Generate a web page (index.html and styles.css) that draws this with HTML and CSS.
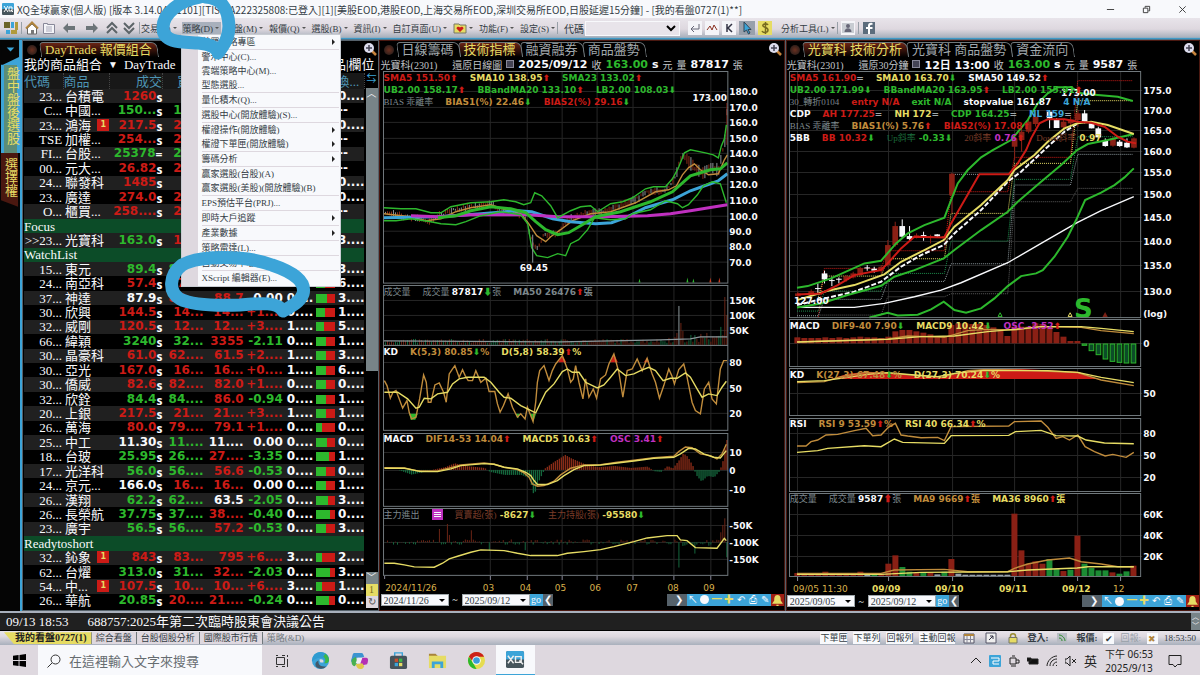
FILE: index.html
```html
<!DOCTYPE html>
<html lang="zh-Hant">
<head>
<meta charset="utf-8">
<title>XQ全球贏家(個人版)</title>
<link rel="stylesheet" href="styles.css">
</head>
<body>
<header class="titlebar">
  <svg class="app-logo" viewBox="0 0 12 12"><rect width="12" height="7" rx="1" fill="#3ca4d8"/><rect y="6" width="12" height="6" rx="1" fill="#46555c"/><path d="M2 3l4 6M6 3L2 9M7 4h3v4H7zM9 7l2 2" stroke="#fff" fill="none"/></svg>
  <h1>XQ全球贏家(個人版) [版本 3.14.04.21101][TISC:A222325808:已登入][1][美股EOD,港股EOD,上海交易所EOD,深圳交易所EOD,日股延遲15分鐘] - [我的看盤0727(1)**]</h1>
  <div class="win-buttons">
    <button aria-label="最小化"><svg viewBox="0 0 10 10"><path d="M1 5h8"/></svg></button>
    <button aria-label="還原"><svg viewBox="0 0 10 10"><path d="M1.500 3.500h5v5h-5zM3.500 3V1.500h5v5H7"/></svg></button>
    <button aria-label="關閉"><svg viewBox="0 0 10 10"><path d="M1.500 1.500l7 7M8.500 1.500l-7 7"/></svg></button>
  </div>
</header>

<nav class="toolbar">
  <div class="tools">
    <button aria-label="版面"><svg viewBox="0 0 14 14"><path fill="#6a6428" d="M0 1h6v6H0z"/><path fill="#3ca4d8" d="M7 1h3v6H7zM2 9h4v4H2z"/><path fill="#b09a3c" d="M11 1h3v8h-3zM7 9h6v4H7z"/></svg></button>
    <i class="sep"></i>
    <button aria-label="首頁"><svg viewBox="0 0 14 14"><path d="M2.500 7v6h9V7L7 3z" fill="#fff" stroke="#666"/><path d="M1 7.500L7 1.500l6 6" fill="none" stroke="#b0843c" stroke-width="2"/><path d="M6 9h3v4H6z" fill="#777"/></svg></button>
    <button aria-label="頁面"><svg viewBox="0 0 14 14"><path d="M1.500 2.500h4v1h7v9h-11z" fill="#f4f4f8" stroke="#889"/><path d="M4 6h6M4 8h6M4 10h6" stroke="#aab"/></svg></button>
    <button class="wide" aria-label="上一頁"><svg viewBox="0 0 14 14"><path d="M1 7l5-5v3h7v4H6v3z" fill="#6c7478"/></svg></button>
    <button class="wide" aria-label="下一頁"><svg viewBox="0 0 14 14"><path d="M13 7L8 2v3H1v4h7v3z" fill="#6c7478"/></svg></button>
    <button aria-label="向上"><svg viewBox="0 0 14 14"><path d="M2 7l5-5 5 5M2 12l5-5 5 5" fill="none" stroke="#5c6468" stroke-width="2"/></svg></button>
    <button aria-label="向下"><svg viewBox="0 0 14 14"><path d="M2 2l5 5 5-5M2 7l5 5 5-5" fill="none" stroke="#5c6468" stroke-width="2"/></svg></button>
    <i class="sep"></i>
  </div>
  <div class="menus">
    <button>交易(T)</button>
    <div class="menu-open">
      <button class="on">策略(D)</button>
      <ul class="dropdown">
        <li class="more">普羅策略專區</li>
        <li class="line">警示中心(C)...</li>
        <li>雲端策略中心(M)...</li>
        <li>型態選股...</li>
        <li class="line">量化積木(Q)...</li>
        <li class="line">選股中心(開放體驗)(S)...</li>
        <li class="line more">權證操作(開放體驗)</li>
        <li class="more">權證下單匣(開放體驗)</li>
        <li class="line more">籌碼分析</li>
        <li class="line">贏家選股(台股)(A)</li>
        <li>贏家選股(美股)(開放體驗)(B)</li>
        <li class="line">EPS預估平台(PRJ)...</li>
        <li class="line more">即時大戶追蹤</li>
        <li class="line more">產業數據</li>
        <li class="line">策略雷達(L)...</li>
        <li class="line">自動交易中心(R)...</li>
        <li class="line">XScript 編輯器(E)...</li>
      </ul>
    </div>
    <button>大盤(M)</button>
    <button>報價(Q)</button>
    <button>選股(B)</button>
    <button>資訊(I)</button>
    <button>自訂頁面(U)</button>
    <button aria-label="我的最愛"><svg viewBox="0 0 14 14"><path d="M1 3h5l1 1h6v8H1z" fill="#e6dc64" stroke="#776"/><path d="M7 11L3.500 7.500c0-2 2.500-2.500 3.500-1 1-1.500 3.500-1 3.500 1z" fill="#cc1b16"/></svg></button>
    <button>功能(F)</button>
    <button>設定(S)</button>
  </div>
  <i class="sep"></i>
  <label class="code-label" for="code">代碼</label>
  <select id="code" class="code"><option></option></select>
  <div class="tools right-tools">
    <button class="boxed" aria-label="輸入"><svg viewBox="0 0 14 14"><path d="M11 3v5H4M6 5L3 8l3 3" fill="none" stroke="#667"/></svg></button>
    <button class="boxed" aria-label="走勢"><svg viewBox="0 0 14 14"><path d="M2 9l3-4 2 4 2-5 3 5" fill="none" stroke="#8a3020"/></svg></button>
    <button class="boxed" aria-label="K線"><svg viewBox="0 0 14 14"><path d="M5 3v8M10 3L6 7l4 4" fill="none" stroke="#334" stroke-width="1.500"/></svg></button>
    <button class="picked" aria-label="選取"><svg viewBox="0 0 14 14"><path d="M4 1v10l2.500-2 2 4 1.500-1-2-3.500h3z" fill="#3ca4d8" stroke="#345"/></svg></button>
    <button class="gold" aria-label="金額"><svg viewBox="0 0 14 14"><path d="M10 4c-1-2-6-1-5 1s5 1 5 4-5 3-6 1M7.500 1v12" fill="none" stroke="#776a20" stroke-width="1.500"/></svg></button>
  </div>
  <div class="menus"><button>分析工具(L)</button></div>
  <div class="tools">
    <i class="sep"></i>
    <button class="boxed" aria-label="客服"><svg viewBox="0 0 14 14"><path d="M1 2h12v10H1z" fill="#c8ccd2"/><circle cx="7" cy="5" r="2" fill="#667"/><path d="M3.500 11c0-5 7-5 7 0z" fill="#667"/></svg></button>
    <i class="sep"></i>
    <button aria-label="Facebook"><svg viewBox="0 0 14 14"><path d="M1 1h12v12H1z" fill="#5c6c7c"/><path d="M8 13V8h2.500V6H8V5q0-1.500 2.500-1.200V2Q6 1.200 6 5v1H4v2h2v5z" fill="#fff"/></svg></button>
  </div>
</nav>

<main class="workspace">
  <aside class="side">
    <svg class="side-top" viewBox="0 0 20 26"><path d="M0 0h19v18L2 26H0z" fill="#050505"/><path d="M6 8h8l-4 4z" fill="#3ca4d8"/></svg>
    <a class="side-tab active" href="#a">盤中盤後選股</a>
    <a class="side-tab" href="#b">選擇權</a>
  </aside>

  <section class="panel quotes-panel">
    <div class="tabs">
      <i class="knob"></i>
      <a class="tab on" href="#q">DayTrade 報價組合</a>
      <svg class="lens" viewBox="0 0 14 14"><path d="M9 9l4 4" stroke="#c8843c" stroke-width="2.500"/><circle cx="6" cy="6" r="5" fill="#dde"/><path d="M3 6h6M6 3v6" stroke="#445" stroke-width="1.500"/></svg>
    </div>
    <div class="combo"><span>我的商品組合</span><span>▼</span><span>DayTrade</span><span class="combo-end">商品|欄位</span></div>
    <div class="quotes-wrap">
      <table class="quotes">
        <colgroup><col class="w-code"><col class="w-name"><col class="w-price"><col class="w-c5"><col class="w-c6"><col class="w-c7"><col class="w-c8"><col class="w-bar"><col class="w-c9"></colgroup>
        <thead><tr><th>代碼</th><th>商品</th><th class="r">成交</th><th class="r">買進</th><th class="r">賣出</th><th class="r">漲幅</th><th>單量</th><th></th><th>換...</th></tr></thead>
        <tbody id="quotes"></tbody>
      </table>
      <div class="vscroll">
        <span class="vs-top">⇆</span><span class="vs-thumb">︿</span><span class="vs-track"></span><span class="vs-btn">﹀</span><span class="vs-one">1</span><span class="vs-btn light">↻</span>
      </div>
    </div>
  </section>

  <section class="panel chart-panel day">
    <div class="tabs">
      <i class="knob"></i>
      <a class="tab" href="#1">日線籌碼</a><a class="tab on" href="#2">技術指標</a><a class="tab" href="#3">融資融券</a><a class="tab" href="#4">商品盤勢</a>
      <svg class="lens" viewBox="0 0 14 14"><path d="M9 9l4 4" stroke="#c8843c" stroke-width="2.500"/><circle cx="6" cy="6" r="5" fill="#dde"/><path d="M3 6h6M6 3v6" stroke="#445" stroke-width="1.500"/></svg>
    </div>
    <div class="info"><span class="sym">光寶科(2301)</span><span>還原日線圖</span><i class="mark"></i><b>2025/09/12</b><span>收</span><b class="green">163.00</b><b>s</b><span>元</span><span>量</span><b>87817</b><span>張</span></div>

    <div class="pane">
      <div class="legend">
        <p><span class="red">SMA5 151.50<i class="up">⬆</i></span><span class="yellow">SMA10 138.95<i class="up">⬆</i></span><span class="green">SMA23 133.02<i class="up">⬆</i></span></p>
        <p><span class="green">UB2.00 158.17<i class="up">⬆</i></span><span class="green">BBandMA20 133.10<i class="up">⬆</i></span><span class="green">LB2.00 108.03<i class="dn">⬇</i></span></p>
        <p><span class="dim">BIAS 乖離率</span><span class="orange">BIAS1(%) 22.46<i class="dn">⬇</i></span><span class="red">BIAS2(%) 29.16<i class="dn">⬇</i></span></p>
      </div>
      <svg viewBox="380 71 404 214">
        <g class="grid" id="day-grid1"></g>
        <g id="day-candles"></g>
        <polyline class="l-orange" points="383,214 410,217 425,221 440,219 455,212 470,208 490,205 505,210 520,214 528,224 536,236 545,242 550,237 560,230 572,221 590,214 610,212 635,203 655,192 668,190 676,186 682,175 688,168 694,164 700,170 708,175 718,174 724,160 727,155"/>
        <polyline class="l-blue fat" points="383,218 437,217 480,214 505,212 517,211 531,212 552,219 570,222 595,224 611,223 625,218 645,208 672,200 690,191 710,184 718,181 727,174"/>
        <polyline class="l-magenta fat" points="410,216 437,217 470,215 527,215 557,217 603,217 647,216 670,214 690,211 727,205"/>
        <polyline class="l-green fat" points="437,218 455,216 470,211 490,207 510,209 525,213 535,222 545,230 557,235 568,233 580,226 595,217 620,212 650,202 672,192 690,176 710,170 720,169 727,163"/>
        <polyline class="l-green" points="383,208 400,209 415,209 430,213 440,213 450,207 470,203 490,202 503,200 515,202 523,205 530,203 534,193 541,196 550,206 557,218 570,211 580,207 590,206 597,212 610,204 622,202 632,198 645,189 653,187 665,187 672,179 678,168 684,153 690,150 705,153 713,155 718,158 721,146 724,139 726,125"/>
        <polyline class="l-green" points="383,221 395,221 410,219 430,222 440,224 455,225 465,222 480,216 500,212 520,215 527,224 531,248 536,256 547,258 557,254 565,256 570,244 578,240 587,230 594,218 610,220 625,219 632,214 650,210 665,201 677,204 682,208 688,205 697,195 703,186 712,182 720,184 726,203"/>
        <path class="l-gray" d="M532 235v28"/>
        <path d="M638 283l1-4 1 4zM686 283l1-5 1 5zM692 283l1-4 1 4z" fill="#2db82d"/><path d="M709 283l1-5 1 5zM718 283l1-5 1 5z" fill="#c83c20"/>
        <text x="519" y="271">69.45</text><text x="692" y="101">173.00</text>
        <rect class="frame" x="382.500" y="71.500" width="345" height="212"/>
      </svg>
    </div>
    <div class="pane">
      <div class="legend"><p class="dim"><span>成交量</span><span>成交量 <b class="white">87817</b><i class="dn">⬇</i>張</span><span>MA50 26476<i class="up">⬆</i>張</span></p></div>
      <svg viewBox="380 285 404 61">
        <g class="grid" id="day-grid2"></g>
        <g id="day-vol"></g>
        <polyline class="l-gray" points="383,341 560,342 660,340 690,339 700,337 727,337"/>
        <rect class="frame" x="382.500" y="285.500" width="345" height="60"/>
      </svg>
    </div>
    <div class="pane">
      <div class="legend"><p><span class="white">KD</span><span class="orange">K(5,3) 80.85<i class="dn">⬇</i>%</span><span class="yellow">D(5,8) 58.39<i class="up">⬆</i>%</span></p></div>
      <svg viewBox="380 346 404 87">
        <g class="grid" id="day-grid3"></g>
        <g transform="translate(370 340) scale(.33333)">
          <path fill="#2db82d" d="M115 225h26l-8 18h-14zM434 225h14l-6 14zM478 225h18l-8 24z"/>
          <path fill="#cc1b16" d="M563 70l12-22 12 22zM720 70l10-26 12 26zM820 70l9-14 7 14z"/>
          <polyline class="l-orange" points="40,125 48,140 58,178 66,160 75,155 84,178 95,208 108,185 115,222 122,240 135,235 146,180 158,108 166,130 172,190 180,190 192,138 205,132 218,160 226,190 235,105 245,90 252,80 265,115 275,92 283,110 292,125 305,125 315,95 330,130 345,118 355,158 372,158 380,195 388,220 398,200 412,165 425,205 440,235 450,225 463,240 470,205 487,248 495,190 500,130 507,95 520,80 535,125 545,95 555,75 575,50 590,90 600,130 608,120 615,80 625,130 637,180 645,120 655,175 668,150 678,178 690,120 705,108 715,75 730,45 745,100 757,175 770,95 785,90 800,60 815,95 830,58 845,105 855,130 867,178 880,140 895,90 904,110 912,135 925,92 940,75 949,110 957,150 965,190 975,215 990,225 1002,150 1015,130 1025,180 1038,195 1050,90 1060,65 1070,65"/>
          <polyline class="l-yellow" points="40,160 80,160 110,180 135,208 145,205 160,178 180,180 200,165 230,160 245,135 265,120 290,115 340,115 360,130 385,160 400,175 420,178 450,200 475,212 495,222 510,190 525,160 550,135 575,98 590,90 605,100 625,100 645,130 680,147 700,138 720,115 740,90 765,110 790,105 810,95 835,85 855,95 878,125 900,118 920,118 945,102 960,115 980,150 995,175 1015,165 1040,170 1055,145 1068,127"/>
        </g>
        <rect class="frame" x="382.500" y="346.500" width="345" height="85"/>
      </svg>
    </div>
    <div class="pane">
      <div class="legend"><p><span class="white">MACD</span><span class="orange">DIF14-53 14.04<i class="up">⬆</i></span><span class="yellow">MACD5 10.63<i class="up">⬆</i></span><span class="magenta">OSC 3.41<i class="up">⬆</i></span></p></div>
      <svg viewBox="380 433 404 76">
        <g class="grid" id="day-grid4"></g>
        <g transform="translate(370 340) scale(.33333)">
          <g id="day-osc"></g>
          <polyline class="l-orange" points="40,386 100,387 140,396 200,396 240,386 270,378 340,372 370,376 400,385 440,392 460,402 475,415 485,435 500,442 520,440 550,427 570,408 600,388 640,378 690,377 740,370 790,364 850,356 910,352 925,338 945,324 965,326 990,345 1020,350 1040,360 1055,345 1068,316"/>
          <polyline class="l-yellow" points="40,388 100,388 150,398 200,398 240,390 270,380 340,374 370,376 400,385 440,390 465,400 480,410 490,425 500,437 530,437 560,425 580,410 610,392 640,380 690,378 740,372 790,366 850,358 910,355 930,345 955,328 975,330 1000,345 1030,355 1050,357 1068,335"/>
        </g>
        <rect class="frame" x="382.500" y="434.500" width="345" height="73"/>
      </svg>
    </div>
    <div class="pane">
      <div class="legend"><p><span class="dim">主力進出</span><i class="note"></i><span class="yellow"><em>買賣超(張)</em> -8627<i class="dn">⬇</i></span><span class="yellow"><em>主力持股(張)</em> -95580<i class="dn">⬇</i></span></p></div>
      <svg viewBox="380 509 404 68">
        <g class="grid" id="day-grid5"></g>
        <g transform="translate(370 340) scale(.33333)">
          <g id="day-net"></g>
          <polyline class="l-yellow" points="40,673 70,673 100,678 130,684 190,685 215,673 235,660 260,652 300,640 330,633 400,635 440,643 480,650 560,650 590,643 640,638 690,632 730,623 790,608 830,597 890,590 920,590 930,603 950,605 975,626 1040,628 1062,598 1068,605"/>
        </g>
        <rect class="frame" x="382.500" y="509.500" width="345" height="67"/>
      </svg>
    </div>
    <svg viewBox="380 577 404 18">
      <path stroke="#889" d="M383.500 577v3M489.500 577v4M526.500 577v4M561.500 577v4M596.500 577v4M632.500 577v4M673.500 577v4M710.500 577v4"/>
      <g class="dates"><text x="384" y="592">2024/11/26</text><text x="482" y="592">03</text><text x="519" y="592">04</text><text x="554" y="592">05</text><text x="589" y="592">06</text><text x="626" y="592">07</text><text x="667" y="592">08</text><text x="703" y="592">09</text></g>
    </svg>
    <div class="range">
      <span class="pick"><select aria-label="起始日"><option>2024/11/26</option></select></span><span>~</span>
      <span class="pick"><select aria-label="結束日"><option>2025/09/12</option></select></span>
      <button class="go">go</button><button class="nudge">❮</button><i class="track"></i><button class="nudge end">❯</button>
      <span class="strip"><button aria-label="游標">↖</button><button aria-label="時間"><i class="clock"></i></button><button class="gold-t" aria-label="縮小">━</button><button class="gold-t" aria-label="放大">✚</button><button aria-label="還原">↶</button><button aria-label="列印">⎙</button><button aria-label="畫線">✎</button></span>
      <button class="bell" aria-label="警示"><svg viewBox="0 0 12 12"><path d="M6 1c3 0 3 3 3 5l2 3H1l2-3c0-2 0-5 3-5zM5 10h2v1H5z" fill="#e6dc64"/></svg></button>
    </div>
  </section>

  <section class="panel chart-panel min30">
    <div class="tabs">
      <i class="knob"></i>
      <a class="tab on" href="#5">光寶科 技術分析</a><a class="tab" href="#6">光寶科 商品盤勢</a><a class="tab" href="#7">資金流向</a>
      <svg class="lens" viewBox="0 0 14 14"><path d="M9 9l4 4" stroke="#c8843c" stroke-width="2.500"/><circle cx="6" cy="6" r="5" fill="#dde"/><path d="M3 6h6M6 3v6" stroke="#445" stroke-width="1.500"/></svg>
    </div>
    <div class="info"><span class="sym">光寶科(2301)</span><span>還原30分鐘</span><i class="mark"></i><b>12日 13:00</b><span>收</span><b class="green">163.00</b><b>s</b><span>元</span><span>量</span><b>9587</b><span>張</span></div>

    <div class="pane">
      <div class="legend">
        <p><span class="red">SMA5 161.90<i class="eq">=</i></span><span class="yellow">SMA10 163.70<i class="dn">⬇</i></span><span class="white">SMA50 149.52<i class="up">⬆</i></span></p>
        <p><span class="green">UB2.00 171.99<i class="dn">⬇</i></span><span class="green">BBandMA20 163.95<i class="up">⬆</i></span><span class="green">LB2.00 155.91<i class="up">⬆</i></span></p>
        <p><span class="dim">30_轉折0104</span><span class="red">entry N/A</span><span class="green">exit N/A</span><span class="white">stopvalue 161.87</span><span class="blue">4 N/A</span></p>
        <p><span class="white">CDP</span><span class="red">AH 177.25<i class="eq">=</i></span><span class="yellow">NH 172<i class="eq">=</i></span><span class="green">CDP 164.25<i class="eq">=</i></span><span class="blue">NL 159<i class="eq">=</i></span></p>
        <p><span class="dim">BIAS 乖離率</span><span class="orange">BIAS1(%) 5.76<i class="up">⬆</i></span><span class="red">BIAS2(%) 17.08<i class="up">⬆</i></span></p>
        <p><span class="white">5BB</span><span class="red">BB 10.32<i class="dn">⬇</i></span><span class="green"><em class="teal">Up斜率</em> -0.33<i class="dn">⬇</i></span><span class="magenta"><em>20斜率</em> 0.76<i class="up">⬆</i></span><span class="yellow"><em>Down斜率</em> 0.97</span></p>
      </div>
      <svg viewBox="786 71 412 248">
        <g class="grid" id="min-grid1"></g>
        <g transform="translate(780 140) scale(.33333)">
          <g class="dots">
            <polyline class="l-red" points="112,530 130,385 300,385 320,332 490,332 510,155 680,155 700,52 868,52 890,-178 1055,-178"/>
            <polyline class="l-yellow" points="112,470 130,408 300,408 320,356 490,356 510,220 680,220 700,70 868,70 890,-118 1055,-118"/>
            <polyline class="l-teal" points="48,513 112,513 130,453 300,453 320,400 490,400 510,303 680,303 700,118 868,118 890,-10 1055,-10"/>
            <polyline class="l-gray" points="48,527 112,527 130,478 300,478 320,424 490,424 510,371 680,371 700,135 868,135 890,43 1055,43"/>
            <polyline class="l-dim" points="112,525 300,525 320,470 490,470 510,461 680,461 700,185 868,185 890,145 1055,145"/>
            <polyline class="l-gray" points="510,103 595,103"/>
          </g>
          <g id="min-candles"></g>
          <polyline class="l-white" points="48,502 220,502 310,490 400,470 480,450 540,428 680,368 780,310 888,248 960,212 1058,170"/>
          <polyline class="l-white mid dash" points="48,495 130,475 220,455 300,425 360,380 420,345 488,315 520,280 600,210 680,125 720,95 800,20 850,-25 890,-50"/>
          <polyline class="l-green mid" points="265,532 320,518 350,526 410,524 450,508 488,485 520,510 555,518 600,505 640,475 680,438 720,408 765,400 785,390 820,350 860,290 885,240 912,180 960,158 1000,135 1030,112 1058,85"/>
          <polyline class="l-green mid" points="48,502 120,490 200,465 300,437 340,410 400,390 488,355 520,330 600,270 680,215 710,185 780,125 840,75 888,30 920,12 980,0 1058,-18"/>
          <polyline class="l-green mid" points="48,443 80,438 150,415 250,370 300,362 345,310 380,280 430,255 490,233 510,180 530,130 560,90 600,52 635,30 690,0 740,-60 770,-110 800,-140 830,-158 870,-158 900,-140 950,-135 1010,-130 1055,-117"/>
          <polyline class="l-yellow mid" points="48,480 140,452 220,435 310,403 360,365 430,330 488,300 520,260 600,195 680,120 700,90 760,45 800,5 850,-35 888,-50 930,-55 980,-45 1058,-18"/>
          <polyline class="l-red mid" points="48,463 120,460 170,435 220,405 300,390 320,370 360,325 400,290 490,292 510,250 595,103 683,103 710,70 735,30 750,-5 775,-50 800,-62 850,-62 890,-55 930,-52 970,-40 1010,-10 1040,5 1065,10"/>
          <path class="l-green" d="M651 529l6-11 6 11z"/><path class="l-yellow" d="M861 529l6-11 6 11z"/><path fill="#7a2015" d="M964 531l8-15 8 15z"/>
        </g>
        <text x="1060" y="96">173.00</text>
        <text x="793" y="304">127.00</text>
        <text class="big-s" x="1073" y="318">S</text>
        <rect class="frame" x="788.500" y="71.500" width="351" height="246"/>
      </svg>
    </div>
    <div class="pane">
      <div class="legend"><p><span class="white">MACD</span><span class="orange">DIF9-40 7.90<i class="dn">⬇</i></span><span class="yellow">MACD9 10.42<i class="dn">⬇</i></span><span class="magenta">OSC -2.52<i class="up">⬆</i></span></p></div>
      <svg viewBox="786 319 412 49">
        <g class="grid" id="min-grid2"></g>
        <g transform="translate(780 140) scale(.33333)">
          <g id="min-osc"></g>
          <polyline class="l-orange" points="48,606 320,597 380,588 490,592 560,572 620,568 700,570 780,560 900,562 960,572 1058,581"/>
          <polyline class="l-yellow" points="48,606 320,598 420,590 520,588 620,575 700,568 780,560 900,560 960,565 1058,575"/>
        </g>
        <rect class="frame" x="788.500" y="319.500" width="351" height="47"/>
      </svg>
    </div>
    <div class="pane">
      <div class="legend"><p><span class="white">KD</span><span class="orange">K(27,3) 67.48<i class="dn">⬇</i>%</span><span class="yellow">D(27,3) 70.24<i class="dn">⬇</i>%</span></p></div>
      <svg viewBox="786 368 412 49">
        <g class="grid" id="min-grid3"></g>
        <g transform="translate(780 340) scale(.33333)">
          <path fill="#cc1b16" d="M150 117l50-16 60-6 80 4 60 10 80 4 80-20 60-6h100l170 8 60 22z"/>
          <polyline class="l-orange" points="48,128 130,125 180,110 250,98 330,100 480,112 560,92 620,88 750,92 890,98 960,120 1058,137"/>
          <polyline class="l-yellow" points="48,125 130,122 200,112 260,103 320,98 400,105 470,110 520,100 600,92 700,92 800,92 890,97 960,112 1058,128"/>
        </g>
        <rect class="frame" x="788.500" y="368.500" width="351" height="47"/>
      </svg>
    </div>
    <div class="pane">
      <div class="legend"><p><span class="white">RSI</span><span class="orange">RSI 9 53.59<i class="up">⬆</i>%</span><span class="yellow">RSI 40 66.34<i class="up">⬆</i>%</span></p></div>
      <svg viewBox="786 417 412 75">
        <g class="grid" id="min-grid4"></g>
        <g transform="translate(780 340) scale(.33333)">
          <polyline class="l-orange" points="48,318 75,318 90,305 110,300 135,285 170,283 220,272 255,265 275,287 300,285 322,262 343,250 360,285 380,288 420,293 470,292 490,302 510,260 683,258 700,245 780,243 800,262 825,295 845,290 865,300 890,285 912,320 940,335 972,348 995,343 1035,352 1058,337"/>
          <polyline class="l-yellow" points="48,337 110,332 140,325 250,317 300,320 340,297 365,307 490,310 510,287 683,286 703,275 780,271 825,287 890,288 915,300 970,309 1058,311"/>
        </g>
        <rect class="frame" x="788.500" y="418.500" width="351" height="73"/>
      </svg>
    </div>
    <div class="pane">
      <div class="legend"><p class="dim"><span>成交量</span><span>成交量 <b class="white">9587</b><i class="up">⬆</i>張</span><span class="orange">MA9 9669<i class="up">⬆</i>張</span><span class="yellow">MA36 8960<i class="up">⬆</i>張</span></p></div>
      <svg viewBox="786 492 412 85">
        <g class="grid" id="min-grid5"></g>
        <g transform="translate(780 340) scale(.33333)">
          <g id="min-vol"></g>
          <polyline class="l-orange" points="48,700 300,700 340,690 490,688 560,695 680,695 700,685 740,672 800,660 865,654 900,665 960,672 1010,680 1058,680"/>
          <polyline class="l-yellow" points="48,703 300,703 420,697 680,695 740,690 888,684 920,680 1058,680"/>
        </g>
        <rect class="frame" x="788.500" y="493.500" width="351" height="83"/>
      </svg>
    </div>
    <svg viewBox="786 577 412 18">
      <path stroke="#889" d="M796.500 577v4M887.500 577v4M951.500 577v4M1013.500 577v4M1076.500 577v4M1119.500 577v4"/>
      <g class="dates"><text x="792" y="592">09/05 11:30</text><text class="bold" x="871" y="592">09/09</text><text class="bold" x="934" y="592">09/10</text><text class="bold" x="998" y="592">09/11</text><text class="bold" x="1061" y="592">09/12</text><text x="1112" y="592">12</text></g>
    </svg>
    <div class="range">
      <span class="pick"><select aria-label="起始日"><option>2025/09/05</option></select></span><span>~</span>
      <span class="pick"><select aria-label="結束日"><option>2025/09/12</option></select></span>
      <button class="go">go</button><button class="nudge">❮</button><i class="track"></i><button class="nudge end">❯</button>
      <span class="strip"><button aria-label="游標">↖</button><button aria-label="時間"><i class="clock"></i></button><button class="gold-t" aria-label="縮小">━</button><button class="gold-t" aria-label="放大">✚</button><button aria-label="還原">↶</button><button aria-label="列印">⎙</button><button aria-label="畫線">✎</button></span>
      <button class="bell" aria-label="警示"><svg viewBox="0 0 12 12"><path d="M6 1c3 0 3 3 3 5l2 3H1l2-3c0-2 0-5 3-5zM5 10h2v1H5z" fill="#e6dc64"/></svg></button>
    </div>
  </section>
</main>

<div class="ticker"><span>09/13 18:53</span><span>688757:2025年第二次臨時股東會決議公告</span><span class="spin"><button>︿</button><button>﹀</button></span></div>

<div class="status">
  <a class="page on" href="#p1">我的看盤0727(1)</a><a class="page" href="#p2">綜合看盤</a><a class="page" href="#p3">台股個股分析</a><a class="page" href="#p4">國際股市行情</a><a class="page plain" href="#p5">策略(&amp;D)</a>
  <div class="status-right">
    <button>下單匣</button><button>下單列</button><button>回報列</button><button>主動回報</button>
    <svg viewBox="0 0 12 12"><path d="M1 2h10v9H1z" fill="#eee" stroke="#556"/><path d="M1 2h10v2H1z" fill="#b0843c"/><path d="M4 4v7M7.500 4v7M1 7.500h10" stroke="#889"/></svg>
    <svg viewBox="0 0 12 12"><path d="M1 1h10v10H1z" fill="#eee" stroke="#556"/><path d="M4 8l4-4M5 4h3v3" fill="none" stroke="#334"/></svg>
    <svg viewBox="0 0 12 12"><path d="M3.500 6V4c0-3 5-3 5 0v2" fill="none" stroke="#998c30" stroke-width="1.500"/><path d="M2 5.500h8V11H2z" fill="#e6dc64" stroke="#776"/></svg>
    <b>登入:</b>
    <svg viewBox="0 0 12 12"><path d="M1 1h10v10H1z" fill="#b8bcc4"/><path d="M3 3c3 0 6 3 6 6M3 6c2 0 3 1 3 3" fill="none" stroke="#2a8a2a"/></svg>
    <b>報價:</b><span class="box">✔</span><span class="off">回報:</span><span class="box x">✖</span><time>18:53:50</time>
  </div>
</div>

<footer class="taskbar">
  <button class="start" aria-label="開始"><svg viewBox="0 0 14 14"><path d="M0 2l6-1v5.500H0zM7 1l7-1v6.500H7zM0 7.500h6V13l-6-1zM7 7.500h7V14l-7-1z"/></svg></button>
  <label class="search"><svg viewBox="0 0 14 14"><circle cx="8.500" cy="5.500" r="4.500" fill="none" stroke="#333"/><path d="M5 9l-4.500 4.500" stroke="#333"/></svg><input type="text" aria-label="搜尋" placeholder="在這裡輸入文字來搜尋"></label>
  <div class="apps">
    <button aria-label="工作檢視"><svg class="small" viewBox="0 0 14 14"><path d="M1.500 3.500h8v7h-8zM1 1.500h2M7 1.500h3M1 12.500h2M7 12.500h3M12.500 1v2M12.500 5v8" fill="none" stroke="#333"/></svg></button>
    <button aria-label="Edge"><svg viewBox="0 0 20 20"><circle cx="10" cy="10" r="9" fill="#3ca4d8"/><path d="M10 1c6 0 9 4 9 8 0 3-3 4-5 4 2-3 0-6-4-6-4 0-7 2-9 4 0-6 4-10 9-10z" fill="#2f9bd0"/><path d="M15 3c3 2 4 5 4 7-1 3-3 3-5 3 2-3 1-6-1-7z" fill="#3cb848"/><path d="M8 10c-1 4 2 7 8 6-3 4-9 3-11 0-1-3 0-5 3-6z" fill="#44596a"/><path d="M9 9c2-1 5 0 4 3h-3c-1-1-1-2-1-3z" fill="#ded8df"/></svg></button>
    <button aria-label="Copilot"><svg viewBox="0 0 20 20"><path d="M5 2h7c2 0 2 2 3 4l-3 1H7L5 12c-5 0-4-2-3-5 1-4 1-5 3-5z" fill="#3c94d0"/><path d="M2 9l4-3 2 6-3 4c-3 0-4-4-3-7z" fill="#48b050"/><path d="M13 7h4c3 0 2 4 1 7l-5 1-3-3z" fill="#b430b4"/><path d="M6 14l7-1 2 3c-1 2-2 3-4 3-3 0-4-2-5-5z" fill="#e0c84c"/><path d="M8 7h5l-2 6H6z" fill="#f0eef4"/></svg></button>
    <button aria-label="Store"><svg viewBox="0 0 20 20"><path d="M6 6V2h8v4" fill="none" stroke="#3ca4d8" stroke-width="1.500"/><rect x="1" y="5" width="18" height="14" rx="2" fill="#46525a"/><path d="M6 8h3.500v3.500H6z" fill="#c8502c"/><path d="M10.500 8H14v3.500h-3.500z" fill="#3cb848"/><path d="M6 12.500h3.500V16H6z" fill="#3ca4d8"/><path d="M10.500 12.500H14V16h-3.500z" fill="#e6dc64"/></svg></button>
    <button aria-label="檔案總管"><svg viewBox="0 0 20 20"><path d="M1 3h7l2 2v4H1z" fill="#a8843c"/><path d="M1 5h18v13H1z" fill="#e6dc64"/><path d="M4 18v-7h12v7h-3v-4H7v4z" fill="#3ca4d8"/></svg></button>
    <button aria-label="Chrome"><svg viewBox="0 0 20 20"><circle cx="10" cy="10" r="9" fill="#e6dc50"/><path d="M2 6a9 9 0 0 1 16 0l-8 0-3 6z" fill="#cc2018"/><path d="M2 6l4.500 7L10 19A9 9 0 0 1 2 6z" fill="#2db82d"/><circle cx="10" cy="10" r="4.500" fill="#fff"/><circle cx="10" cy="10" r="3.500" fill="#3c9cd8"/></svg></button>
    <button class="running" aria-label="XQ"><svg viewBox="0 0 20 20"><rect x="0" y="1" width="19" height="18" rx="2" fill="#46555c"/><path d="M0 10V3q0-2 2-2h15q2 0 2 2v7z" fill="#3ca4d8"/><path d="M2 6l6 8M8 6l-6 8M10 7h6v6h-6zM14 11l4 4" fill="none" stroke="#eee" stroke-width="1.500"/></svg></button>
  </div>
  <div class="tray">
    <svg viewBox="0 0 12 12"><path d="M1 8l5-5 5 5"/></svg>
    <svg viewBox="0 0 12 12"><rect width="12" height="12" rx="1" fill="#3ca4d8" stroke="none"/><path d="M2 3h8v3H4v3h6" stroke="#fff"/></svg>
    <svg viewBox="0 0 12 12"><path d="M2 3h6v6H2zM8 5h3v3H8M4 1h3M3 11h5"/></svg>
    <svg viewBox="0 0 12 12"><path d="M2 4h9v5H2z" fill="#111"/><path d="M0 3h4v3H0z" fill="#111"/></svg>
    <svg viewBox="0 0 12 12"><path d="M1 11C1 6 6 1 11 1M4 11c0-4 3-7 7-7M7 11c0-2 2-4 4-4M10 11l1-1"/></svg>
    <svg viewBox="0 0 12 12"><path d="M0 4h2l3-3v10L2 8H0zM7 4l4 4M11 4L7 8"/></svg>
    <span class="ime">英</span>
    <div class="time"><span>下午 06:53</span><span>2025/9/13</span></div>
    <svg class="bubble" viewBox="0 0 14 14"><path d="M1 1.500h12v9H9.500L7 13l-2-2.500H1z"/></svg>
  </div>
</footer>

<svg class="scribble" viewBox="0 0 1200 675"><path d="M200 -3C180 0 162 14 163 29C164 43 182 42 198 43C210 44 217 48 218 53C224 45 229 38 229 26C228 8 222 -2 205 -3"/><path d="M283 311C278 302 262 303 240 305C215 306 192 305 180 299C168 292 169 275 182 265C200 255 245 255 272 265C296 273 306 283 303 294C300 302 292 306 283 311"/></svg>
<script src="script.js"></script>
</body>
</html>
```
FILE: styles.css
```css
* {
  box-sizing: border-box;
}
body {
  margin: 0;
  background: #000;
  font-family: "Liberation Serif", "Noto Sans CJK TC", serif;
  font-size: 10px;
  color: #f8f9fc;
  overflow-x: hidden;
}
a {
  color: inherit;
  text-decoration: none;
}
button {
  border: 0;
  padding: 0;
  background: none;
  color: inherit;
  font: inherit;
}
svg {
  display: block;
}
i, em {
  font-style: normal;
}
p, h1, ul {
  margin: 0;
  padding: 0;
}

/* colours */
.red { color: #cc1b16; }
.green { color: #2db82d; }
.yellow { color: #e6dc64; }
.orange { color: #c08c3c; }
.magenta { color: #c030c0; }
.blue { color: #3ca4d8; }
.white { color: #f8f9fc; }
.dim { color: #7c878c; }

/* title bar */
.titlebar {
  display: flex;
  align-items: center;
  gap: 3px;
  height: 18px;
  padding-left: 2px;
  background: #f8f9fc;
  color: #333c44;
}
.app-logo {
  width: 12px;
}
.titlebar h1 {
  font: 10px "Noto Sans CJK TC", sans-serif;
  white-space: nowrap;
}
.win-buttons {
  display: flex;
  margin-left: auto;
}
.win-buttons button {
  width: 36px;
  display: flex;
  justify-content: center;
}
.win-buttons svg {
  width: 9px;
  fill: none;
  stroke: #333;
}

/* tool bar */
.toolbar {
  display: flex;
  align-items: center;
  height: 22px;
  padding: 0 4px 2px;
  background: linear-gradient(#e8e4ea, #ded8df 50%, #a8b0bc 88%, #3ca4d8 92%, #55616a);
  color: #333c44;
}
.tools, .menus {
  display: flex;
  align-items: center;
  gap: 3px;
}
.tools button {
  display: flex;
  justify-content: center;
}
.tools svg, .menus svg {
  width: 14px;
}
.tools .wide {
  width: 20px;
}
.sep {
  width: 1px;
  height: 12px;
  background: #98a0a8;
}
.menus button {
  display: flex;
  align-items: center;
  height: 13px;
  padding: 0 1px;
  font-size: 9px;
  white-space: nowrap;
}
.menus button::after {
  content: "";
  margin: 0 1px 0 2px;
  border: 2px solid transparent;
  border-top-color: #555;
  border-bottom: 0;
}
.menus .on {
  background: #a8b0bc;
}
.menu-open {
  position: relative;
}
.dropdown {
  position: absolute;
  z-index: 5;
  top: 12px;
  left: -1px;
  width: 160px;
  padding: 0 1px 1px 20px;
  list-style: none;
  font-size: 9px;
  line-height: 14px;
  white-space: nowrap;
  background: linear-gradient(90deg, #ded8df 16px, #f8f9fc 16px);
  border: 1px solid #c8ccd2;
}
.dropdown .line {
  border-top: 1px solid #ded8df;
}
.dropdown .more {
  display: flex;
  justify-content: space-between;
  align-items: center;
}
.dropdown .more::after {
  content: "";
  margin-right: 4px;
  border: 3px solid transparent;
  border-left-color: #222;
  border-right: 0;
}
.code-label {
  padding: 0 1px 0 6px;
}
.code {
  width: 95px;
  height: 15px;
  border: 1px solid #f8f9fc;
  background: #e8e4ea;
}
.right-tools {
  padding: 0 8px 0 8px;
}
.boxed {
  background: #f4f4f8;
}
.picked {
  width: 16px;
  background: #98a0ac;
}
.gold {
  background: #e6dc64;
}

/* work area */
.workspace {
  display: flex;
  background: #55616a;
}
.side {
  width: 22px;
  flex: none;
  display: flex;
  flex-direction: column;
  padding-left: 1px;
  background: #050505;
  border-right: 2px solid #3ca4d8;
}
.side-top {
  background: #3ca4d8;
}
.side-tab {
  writing-mode: vertical-rl;
  text-orientation: upright;
  margin-right: 2px;
  padding: 5px 0 10px;
  font-size: 13px;
  line-height: 16px;
  color: #e6dc64;
  background: #4a1810;
  clip-path: polygon(0 0, 100% 0, 100% 100%, 0 88%);
}
.side-tab.active {
  margin-right: 0;
  padding: 2px 0 8px;
  background: linear-gradient(90deg, #3ca4d8 3px, #5c8c78 3px, #5c8c78 16px, #3ca4d8 16px);
  clip-path: none;
}
.panel {
  min-width: 0;
  padding: 1px 0 0 1px;
  border: 1px solid #4a1810;
  background: #000;
  display: flex;
  flex-direction: column;
}
.quotes-panel {
  flex: 356;
  border-color: #55616a;
}
.day {
  flex: 406;
  margin-right: 1px;
}
.min30 {
  flex: 415;
  padding-left: 0;
}
.tabs {
  display: flex;
  align-items: flex-end;
  height: 15px;
}
.knob {
  width: 10px;
  height: 10px;
  margin: 0 3px 2px;
  border-radius: 50%;
  background: radial-gradient(#6a3020, #181818);
}
.tab {
  position: relative;
  z-index: 0;
  margin-right: 2px;
  padding: 0 3px 0 5px;
  font-size: 13px;
  line-height: 15px;
  white-space: nowrap;
  color: #a0a8ac;
}
.tab::before {
  content: "";
  position: absolute;
  z-index: -1;
  inset: 0 -3px 0 0;
  border: 1px solid #70787c;
  border-width: 1px 1px 0;
  border-radius: 4px 6px 0 0;
  transform: skewX(8deg);
}
.tab.on {
  color: #e6dc64;
}
.tab.on::before {
  background: linear-gradient(#6a2415, #000);
}
.lens {
  width: 14px;
  margin: 0 2px 1px auto;
}
.quotes-panel .lens {
  margin-right: 1px;
}
.combo {
  display: flex;
  gap: 6px;
  height: 16px;
  font-size: 13px;
  line-height: 16px;
  white-space: nowrap;
}
.combo span:nth-child(2) {
  font-size: 10px;
}
.combo-end {
  margin-left: auto;
  padding-right: 3px;
}

/* quote table */
.quotes-wrap {
  flex: 1;
  display: grid;
  grid-template-columns: 1fr 13px;
  padding-bottom: 2px;
}
.quotes {
  width: 100%;
  height: 100%;
  table-layout: fixed;
  border-collapse: collapse;
  font-size: 13px;
  line-height: 13px;
}
.w-code { width: 39px; }
.w-name { width: 46px; }
.w-price { width: 53px; }
.w-c5 { width: 41px; }
.w-c6 { width: 40px; }
.w-c7 { width: 39px; }
.w-c8 { width: 31px; }
.w-bar { width: 22px; }
.w-c9 { width: 28px; }
.quotes td, .quotes th {
  padding: 0;
  white-space: nowrap;
}
.quotes th {
  height: 16px;
  font-weight: normal;
  text-align: left;
  color: #4d94b4;
  background: #181818;
  border-right: 1px dotted #444;
}
.quotes .r, .quotes th.r {
  text-align: right;
}
.quotes .num {
  font: bold 12px/13px "DejaVu Sans", sans-serif;
}
.quotes .vol-cell {
  padding-left: 4px;
}
.quotes .turn-cell {
  padding-left: 2px;
}
.quotes .code-cell {
  padding-right: 1px;
  text-align: right;
}
.quotes .name-cell {
  padding-left: 2px;
}
.quotes .odd {
  background: #202020;
}
.quotes .group {
  background: #0c4c28;
}
.name-flex {
  display: flex;
  justify-content: space-between;
}
.badge {
  width: 12px;
  height: 12px;
  background: #cc1b16;
  font: bold 8px/12px "DejaVu Sans", sans-serif;
  text-align: center;
  color: #e6dc64;
}
.settle {
  font: bold 12px/10px "Open Sans", sans-serif;
  vertical-align: -2px;
  color: #f8f9fc;
}
.ratio {
  display: block;
  width: 19px;
  height: 9px;
  margin-left: 2px;
  background: #cc1b16;
}
.ratio i {
  display: block;
  height: 9px;
  background: #2db82d;
}
.vscroll {
  display: flex;
  flex-direction: column;
  margin-left: 1px;
  text-align: center;
  line-height: 12px;
}
.vs-top {
  height: 15px;
  color: #3ca4d8;
}
.vs-thumb {
  flex: 283;
  background: #788488;
}
.vs-track {
  flex: 202;
}
.vs-btn, .vs-one {
  height: 12px;
  background: #788488;
}
.vs-one {
  background: #e6dc64;
  color: #776a20;
}
.vs-btn.light {
  background: #ded8df;
  color: #555;
}

/* charts */
.info {
  display: flex;
  align-items: center;
  gap: 4px;
  height: 14px;
  white-space: nowrap;
  color: #c0c4c8;
}
.info .sym {
  margin-right: 11px;
}
.info b {
  font: bold 11px "DejaVu Sans", "Noto Sans CJK TC", sans-serif;
  color: #f8f9fc;
}
.info b.green {
  color: #2db82d;
}
.mark {
  width: 8px;
  height: 8px;
  border: 1px solid #889;
  background: #445;
}
.pane {
  position: relative;
}
.legend {
  position: absolute;
  top: 1px;
  left: 3px;
  font: bold 9px/12px "DejaVu Sans", "Noto Sans CJK TC", sans-serif;
}
.legend p {
  display: flex;
  gap: 12px;
  height: 12px;
  white-space: nowrap;
}
.legend .dim, .legend em {
  font-family: "Liberation Serif", "Noto Sans CJK TC", serif;
  font-weight: normal;
}
.legend .dim b, .legend .dim .orange, .legend .dim .yellow, .legend .dim span:last-child {
  font: bold 9px/12px "DejaVu Sans", "Noto Sans CJK TC", sans-serif;
}
.legend em {
  color: #7a3c28;
}
.legend em.teal {
  color: #1c6c3c;
}
.up { color: #cc1b16; }
.dn { color: #2db82d; }
.eq { color: #a0a8ac; }
.note {
  width: 11px;
  height: 11px;
  border: 2px solid #c030c0;
  background: repeating-linear-gradient(#c030c0 0 1px, #f8f9fc 1px 2px);
}
.chart-panel > svg, .pane svg {
  width: 100%;
}
.chart-panel text {
  font: bold 9px "DejaVu Sans", sans-serif;
  fill: #f8f9fc;
}
.chart-panel .dates text {
  font-weight: normal;
  fill: #d8b04c;
}
.chart-panel .dates .bold {
  font-weight: bold;
  fill: #e6dc64;
}
.chart-panel .big-s {
  font-size: 26px;
  fill: #2db82d;
}
.frame {
  fill: none;
  stroke: #70787c;
}
.grid path {
  stroke: #262626;
}
polyline, .l-gray, .l-green, .l-yellow {
  fill: none;
  vector-effect: non-scaling-stroke;
}
polyline {
  stroke-width: 1.4;
}
.l-red { stroke: #cc1b16; }
.l-green { stroke: #2db82d; }
.l-yellow { stroke: #e6dc64; }
.l-orange { stroke: #c08c3c; }
.l-magenta { stroke: #c030c0; }
.l-blue { stroke: #3ca4d8; }
.l-white { stroke: #f8f9fc; }
.l-gray { stroke: #8c989c; }
.l-teal { stroke: #1c8c4c; }
.l-dim { stroke: #5c5c5c; }
.fat { stroke-width: 3; }
.mid { stroke-width: 2; }
.dash { stroke-dasharray: 5 2; }
.dots polyline {
  stroke-width: 1;
  stroke-dasharray: 1 1;
}

/* date range row */
.range {
  display: flex;
  align-items: center;
  height: 12px;
  margin-bottom: 3px;
}
.range > span:nth-child(2) {
  width: 13px;
  text-align: center;
}
.pick {
  position: relative;
}
.pick::after {
  content: "";
  position: absolute;
  right: 4px;
  top: 5px;
  border: 3px solid transparent;
  border-top-color: #000;
  border-bottom: 0;
}
.pick select {
  display: block;
  width: 68px;
  height: 12px;
  padding: 0 2px;
  border: 1px solid #a0a8ac;
  appearance: none;
  font: 10px "Liberation Serif", serif;
  color: #333c44;
  background: #f8f9fc;
}
.range button {
  height: 12px;
  line-height: 12px;
}
.go {
  width: 13px;
  background: #3ca4d8;
}
.nudge {
  width: 10px;
  background: #55616a;
}
.nudge.end {
  width: 20px;
  text-align: right;
  padding-right: 4px;
}
.track {
  flex: 1;
}
.strip {
  display: flex;
  background: #3ca4d8;
}
.strip button {
  width: 12px;
}
.gold-t {
  color: #e6dc64;
}
.clock {
  display: block;
  width: 9px;
  height: 9px;
  margin: auto;
  border-radius: 50%;
  background: #f8f9fc;
}
.bell {
  width: 13px;
  background: #a02015;
}

/* news line */
.ticker {
  display: flex;
  gap: 19px;
  height: 20px;
  padding-left: 6px;
  font-size: 13px;
  line-height: 17px;
  background: #202020;
  border-top: 2px solid #a8b0bc;
  border-bottom: 1px solid #000;
}
.spin {
  display: flex;
  flex-direction: column;
  margin-left: auto;
  width: 9px;
}
.spin button {
  flex: 1;
  background: #788488;
  font-size: 7px;
  line-height: 8px;
}

/* page tabs */
.status {
  display: flex;
  align-items: center;
  height: 14px;
  padding-left: 4px;
  font-size: 9px;
  line-height: 12px;
  white-space: nowrap;
  color: #333c44;
  background: linear-gradient(#e8e4ea, #ded8df 40%, #a8b0bc);
}
.page {
  padding: 0 4px;
  border-right: 1px solid #70787c;
  background: #ded8df;
}
.page.on {
  padding: 0 4px 0 11px;
  font-size: 10px;
  font-weight: bold;
  color: #222;
  background: #e6dc64;
  clip-path: polygon(0 0, 100% 0, 100% 100%, 10px 100%);
}
.page.plain {
  border: 0;
  background: none;
  color: #70787c;
}
.status-right {
  display: flex;
  align-items: center;
  gap: 6px;
  margin-left: auto;
  padding-right: 4px;
}
.status-right button {
  background: #f8f9fc;
  height: 12px;
}
.status-right svg {
  width: 12px;
  margin: 0 2px;
}
.status-right b {
  font-size: 9px;
}
.box {
  width: 11px;
  height: 11px;
  background: #f8f9fc;
  text-align: center;
}
.box.x {
  color: #b0843c;
}
.off {
  color: #98a0a8;
}

/* windows task bar */
.taskbar {
  display: flex;
  height: 31px;
  color: #222;
  background: #ded8df;
  font-family: "Noto Sans", "Noto Sans CJK TC", sans-serif;
}
.start {
  width: 38px;
  display: flex;
  align-items: center;
  justify-content: center;
}
.start svg {
  width: 13px;
}
.search {
  display: flex;
  align-items: center;
  gap: 8px;
  width: 224px;
  padding-left: 9px;
  background: #f8f9fc;
}
.search svg {
  width: 14px;
}
.search input {
  width: 180px;
  padding: 0;
  border: 0;
  background: none;
  font: 13px "Noto Sans CJK TC", sans-serif;
}
.search input::placeholder {
  color: #666c70;
}
.apps {
  display: flex;
}
.apps button {
  width: 39px;
  display: flex;
  align-items: center;
  justify-content: center;
}
.apps svg {
  width: 19px;
}
.apps .small {
  width: 14px;
}
.apps .running {
  background: #f8f9fc;
  border-bottom: 2px solid #3ca4d8;
}
.tray {
  display: flex;
  align-items: center;
  gap: 7px;
  margin-left: auto;
  padding-right: 18px;
}
.tray svg {
  width: 12px;
  fill: none;
  stroke: #222;
}
.ime {
  font-size: 13px;
}
.time {
  display: flex;
  flex-direction: column;
  align-items: center;
  width: 50px;
  line-height: 14px;
}
.tray .bubble {
  width: 14px;
  margin-left: 7px;
}

/* hand-drawn marks */
.scribble {
  position: absolute;
  z-index: 10;
  top: 0;
  left: 0;
  width: 100%;
  pointer-events: none;
}
.scribble path {
  fill: none;
  stroke: #3ca4d8;
  stroke-width: 13;
  stroke-linecap: round;
  stroke-linejoin: round;
}
```
FILE: script.js
```js
// r = up, g = down, w = unchanged
const colours = { r: "red", g: "green", w: "white" };

// code, name, badge, price, bid, ask, change, volume, buy share, turnover
const rows = [
  ["23...", "台積電", 0, "r1260", "r1...", "r1...", "r+1....", "0....", 60, "0...."],
  ["C...", "中國...", 0, "g150...", "g15...", "g15...", "g-0.17", "0....", 50, "--"],
  ["23...", "鴻海", 1, "r217.5", "r21...", "r21...", "r+2....", "0....", 50, "0...."],
  ["TSE", "加權...", 0, "r254...", "r25...", "r25...", "r+1....", "0....", 50, "--"],
  ["FI...", "台股...", 0, "g25378", "g25...", "g25...", "g-0.20", "0....", 50, "--", "="],
  ["00...", "元大...", 0, "r26.82", "r26...", "r26...", "r+0....", "0....", 50, "--"],
  ["24...", "聯發科", 0, "r1485", "r1...", "r1...", "r+1....", "0....", 50, "0...."],
  ["23...", "廣達", 0, "r274.0", "r27...", "r27...", "r+1....", "0....", 50, "0...."],
  ["O...", "櫃買...", 0, "r258....", "r25...", "r25...", "r+0....", "0....", 50, "--"],
  "Focus",
  [">>23...", "光寶科", 0, "g163.0", "r16...", "r16...", "g-1.21", "0....", 50, "3...."],
  "WatchList",
  ["15...", "東元", 0, "g89.4", "g89....", "g89.5", "g-0.67", "0....", 50, "3...."],
  ["24...", "南亞科", 0, "r57.4", "r57....", "r59.5", "r+5....", "2....", 50, "6...."],
  ["37...", "神達", 0, "w87.9", "r88....", "r88.7", "w0.00", "0....", 58, "3...."],
  ["30...", "欣興", 0, "r144.5", "r14...", "r14...", "r+1....", "0....", 50, "1...."],
  ["32...", "威剛", 0, "r120.5", "r12...", "r12...", "r+3....", "1....", 42, "5...."],
  ["66...", "緯穎", 0, "g3240", "g32...", "r3355", "g-2.11", "0....", 55, "1...."],
  ["30...", "晶豪科", 0, "r61.0", "r62....", "r61.5", "r+2....", "1....", 55, "3...."],
  ["30...", "亞光", 0, "r167.0", "r16...", "r16...", "r+0....", "1....", 55, "6...."],
  ["30...", "僑威", 0, "r82.6", "r82....", "r82.0", "r+1....", "0....", 55, "0...."],
  ["32...", "欣銓", 0, "g84.4", "g84....", "r86.0", "g-0.94", "0....", 52, "1...."],
  ["20...", "上銀", 0, "r217.5", "r21...", "r21...", "r+3....", "1....", 52, "1...."],
  ["26...", "萬海", 0, "r80.0", "r79....", "r79.1", "r+1....", "0....", 32, "0...."],
  ["25...", "中工", 0, "w11.30", "g11....", "w11....", "w0.00", "0....", 58, "0...."],
  ["18...", "台玻", 0, "g25.95", "g26....", "r27....", "g-3.35", "0....", 68, "1...."],
  ["17...", "光洋科", 0, "g56.0", "g56....", "r56.6", "g-0.53", "0....", 55, "0...."],
  ["24...", "京元...", 0, "w166.0", "r16...", "r16...", "w0.00", "0....", 52, "1...."],
  ["26...", "漢翔", 0, "g62.2", "g62....", "w63.5", "g-2.05", "0....", 65, "3...."],
  ["26...", "長榮航", 0, "g37.75", "g37....", "r38....", "g-0.40", "0....", 72, "0...."],
  ["23...", "廣宇", 0, "g56.5", "g56....", "r57.2", "g-0.53", "0....", 55, "3...."],
  "Readytoshort",
  ["32...", "鈊象", 1, "r843", "r83...", "r795", "r+6....", "3....", 32, "2...."],
  ["62...", "台燿", 0, "g313.0", "g31...", "r32...", "g-2.03", "0....", 72, "3...."],
  ["54...", "中...", 1, "r107.5", "r10...", "r10...", "r+6....", "3....", 32, "1...."],
  ["26...", "華航", 0, "g20.85", "r20....", "r21....", "g-0.24", "0....", 68, "0...."]
];

const num = (v) => `<td class="num r ${colours[v[0]]}">${v.slice(1)}</td>`;
let n = 0;
document.getElementById("quotes").innerHTML = rows.map((r) => {
  if (typeof r === "string") {
    n = 0;
    return `<tr class="group"><td colspan="9">${r}</td></tr>`;
  }
  n++;
  const badge = r[2] ? `<span class="badge">1</span>` : "";
  return `<tr class="${n % 2 ? "odd" : ""}"><td class="code-cell">${r[0]}</td>` +
    `<td class="name-cell"><div class="name-flex">${r[1]}${badge}</div></td>` +
    `<td class="num r ${colours[r[3][0]]}">${r[3].slice(1)}<span class="settle">${r[10] || "s"}</span></td>` +
    num(r[4]) + num(r[5]) + num(r[6]) +
    `<td class="num vol-cell">${r[7]}</td>` +
    `<td><span class="ratio"><i style="width:${r[8]}%"></i></span></td>` +
    `<td class="num turn-cell">${r[9]}</td></tr>`;
}).join("");

// grid lines and axis labels
function grid(id, x1, x2, top, bottom, xs, labels) {
  let s = "";
  xs.forEach((x) => { s += `<path d="M${x + 0.5} ${top}V${bottom}"/>`; });
  labels.forEach(([y, t]) => {
    if (t !== "(log)") s += `<path d="M${x1} ${y + 0.5}H${x2 + 1}"/>`;
    s += `<text x="${x2 + 2}" y="${y + 4}">${t}</text>`;
  });
  document.getElementById(id).innerHTML = s;
}
const dx = [489, 526, 561, 596, 632, 673, 710];
grid("day-grid1", 383, 727, 72, 284, dx, [[91, "180.0"], [107, "170.0"], [122, "160.0"], [138, "150.0"], [153, "140.0"], [169, "130.0"], [184, "120.0"], [200, "110.0"], [216, "100.0"], [231, "90.0"], [246, "80.0"], [262, "70.0"]]);
grid("day-grid2", 383, 727, 286, 345, dx, [[300, "150K"], [315, "100K"], [330, "50K"]]);
grid("day-grid3", 383, 727, 347, 432, dx, [[363, "80"], [389, "50"], [414, "20"]]);
grid("day-grid4", 383, 727, 435, 508, dx, [[453, "10"], [471, "0"], [490, "-10"]]);
grid("day-grid5", 383, 727, 510, 576, dx, [[526, "-50K"], [543, "-100K"], [560, "-150K"]]);
const mx = [796, 887, 951, 1013, 1076, 1119];
grid("min-grid1", 789, 1140, 72, 318, mx, [[90, "175.0"], [110, "170.0"], [130, "165.0"], [151, "160.0"], [172, "155.0"], [194, "150.0"], [217, "145.0"], [241, "140.0"], [265, "135.0"], [291, "130.0"], [313, "(log)"]]);
grid("min-grid2", 789, 1140, 320, 367, mx, [[343, "0"]]);
grid("min-grid3", 789, 1140, 369, 416, mx, [[393, "50"]]);
grid("min-grid4", 789, 1140, 418, 491, mx, [[433, "80"], [455, "50"], [477, "20"]]);
grid("min-grid5", 789, 1140, 493, 577, mx, [[514, "60K"], [535, "40K"], [556, "20K"]]);

// value of a broken line at x
function at(pts, x) {
  for (let i = 1; i < pts.length; i++) {
    if (x <= pts[i][0]) {
      const [a, b] = [pts[i - 1], pts[i]];
      return a[1] + (b[1] - a[1]) * (x - a[0]) / (b[0] - a[0]);
    }
  }
  return pts[pts.length - 1][1];
}
let seed = 7;
function rnd() {
  seed = (seed * 16807) % 2147483647;
  return seed / 2147483647;
}
const bar = (x, y, w, h, c, extra = "") => `<rect x="${x}" y="${y.toFixed(1)}" width="${w}" height="${h.toFixed(1)}" fill="${c}"${extra}/>`;

// daily candles
const close = [[383, 211], [400, 216], [415, 219], [428, 221], [440, 214], [450, 210], [470, 206], [490, 203], [500, 210], [515, 212], [523, 216], [527, 226], [531, 243], [536, 248], [542, 236], [550, 234], [558, 232], [565, 220], [578, 214], [595, 213], [610, 209], [625, 203], [640, 196], [650, 190], [663, 192], [670, 183], [676, 172], [679, 158], [683, 155], [690, 163], [700, 174], [710, 166], [718, 170], [724, 140], [726, 112]];
let s = "";
for (let x = 384; x < 727; x += 2) {
  const h = 2 + rnd() * (x > 670 ? 12 : 5);
  s += bar(x, at(close, x) - h / 2 + rnd() * 3 - 1, 1, h, rnd() > 0.4 ? "#8a2c18" : "#8c9094");
}
s += bar(726, 103, 1, 42, "#7a2015");
document.getElementById("day-candles").innerHTML = s;

// daily volume
const vol = { 676: 12, 678: 39, 680: 22, 682: 14, 690: 10, 700: 11, 706: 12, 718: 9, 720: 18, 724: 48, 726: 30 };
s = "";
for (let x = 384; x < 727; x += 2) {
  const h = vol[x] || 2 + rnd() * (x > 664 ? 8 : 4);
  s += bar(x, 345 - h, 1, h, x === 678 ? "#8c989c" : rnd() > 0.35 ? "#6a2415" : "#14663c");
}
document.getElementById("day-vol").innerHTML = s;

// daily oscillator and net buying
const osc = [[40, 0], [80, 0], [120, -14], [150, -8], [180, 0], [220, 8], [250, 20], [280, 12], [340, 6], [356, -6], [400, -15], [450, -15], [475, -25], [488, -78], [500, -40], [515, -8], [522, 5], [550, 25], [582, 45], [600, 35], [640, 18], [680, 8], [730, 12], [780, 6], [830, 10], [850, -4], [870, -6], [890, 12], [905, 4], [925, 30], [937, 50], [950, 40], [968, 8], [975, -15], [992, -35], [1010, -18], [1030, -22], [1045, -5], [1055, 20], [1066, 90]];
s = "";
for (let x = 42; x < 1070; x += 6) {
  const v = at(osc, x);
  s += bar(x, v > 0 ? 393 - v : 393, 4, Math.abs(v), v > 0 ? "#8a2c18" : "#14663c");
}
document.getElementById("day-osc").innerHTML = s;

const spikes = { 204: 40, 228: 55, 234: 22, 300: 36, 354: -26, 462: -24, 572: 20, 800: 32, 924: -76, 972: -34, 1050: 30, 1056: 52, 1062: 72, 1068: -45 };
s = "";
for (let x = 42; x < 1070; x += 6) {
  const v = spikes[x] || (rnd() - 0.45) * (x > 930 && x < 1040 ? -24 : 16);
  s += bar(x, v > 0 ? 610 - v : 610, 3, Math.abs(v), v > 0 ? "#6a2415" : "#14663c");
}
document.getElementById("day-net").innerHTML = s;

// 30 minute candles: x, wick top, body top, body bottom, wick bottom, up
const candles = [[50, 455, 460, 468, 475, 1], [90, 448, 453, 462, 470, 1], [110, 430, 444, 447, 460, 0], [130, 392, 400, 418, 430, 0], [152, 410, 420, 423, 438, 0], [173, 412, 416, 419, 430, 0], [195, 405, 408, 420, 425, 1], [216, 395, 400, 412, 415, 1], [237, 380, 384, 405, 408, 1], [258, 375, 382, 385, 392, 0], [279, 380, 386, 392, 398, 0], [300, 375, 380, 392, 400, 1], [320, 300, 315, 375, 380, 1], [342, 245, 258, 315, 320, 1], [363, 238, 258, 290, 293, 0], [385, 258, 288, 297, 300, 0], [406, 280, 286, 292, 295, 1], [427, 275, 285, 292, 302, 0], [448, 284, 288, 292, 310, 1], [468, 282, 283, 289, 292, 0], [490, 284, 288, 294, 298, 1], [512, 98, 101, 166, 220, 1], [700, -10, -5, 20, 60, 1], [721, -40, -25, 0, 35, 1], [742, -70, -55, -25, -20, 1], [763, -80, -70, -48, -40, 1], [805, -90, -85, -65, -35, 0], [826, -66, -60, -36, -36, 0], [847, -60, -55, -38, -30, 1], [868, -70, -62, -50, -40, 1], [890, -90, -80, -60, -40, 1], [910, -90, -80, -55, -50, 0], [931, -55, -50, -35, -35, 0], [951, -40, -35, -8, -5, 0], [972, -5, 0, 18, 20, 0], [995, -10, -5, 17, 20, 1], [1015, 0, 5, 18, 20, 0], [1037, -5, 8, 22, 24, 0], [1058, -8, -5, 23, 25, 1]];
document.getElementById("min-candles").innerHTML = candles.map(([x, a, b, c, d, up]) => {
  const f = up ? "#8a2015" : "#f8f9fc";
  return bar(x - 1, a, 3, d - a, f) + bar(x - 8, b, 17, c - b, f);
}).join("");

// 30 minute oscillator
const h30 = [18, 16, 16, 16, 18, 16, 18, 16, 18, 20, 18, 18, 16, 20, 36, 40, 40, 36, 32, 27, 22, 20, 55, 60, 60, 58, 58, 55, 48, 38, 22, 50, 50, 50, 60, 58, 48, 34, 20, 7, 7, -4, -20, -32, -45, -52, -55, -57, -57];
document.getElementById("min-osc").innerHTML = h30.map((v, i) => {
  const x = 40 + i * 21;
  return v > 0 ? bar(x, 610 - v, 18, v, "#8a2015") : bar(x + 2, 612, 14, -v, "#0c4c28", ' stroke="#2db82d" stroke-width="3"');
}).join("");

// 30 minute volume
const v30 = "r10 r10 r10 r10 r14 r10 r8 r8 r8 r14 w6 g6 r8 r38 r63 g28 g14 r12 g10 r12 w6 g14 r52 w8 w5 w5 w5 w5 w5 w5 w5 r188 r78 r38 r45 r38 g52 g22 r16 g20 r122 g38 g25 g18 g18 r12 g8 g15 r32".split(" ");
const fills = { r: "#8a2015", g: "#1c8c34", w: "#98a0a8" };
document.getElementById("min-vol").innerHTML = v30.map((v, i) => {
  const h = +v.slice(1);
  return bar(40 + i * 21, 709 - h, 18, h, fills[v[0]]);
}).join("");
```
